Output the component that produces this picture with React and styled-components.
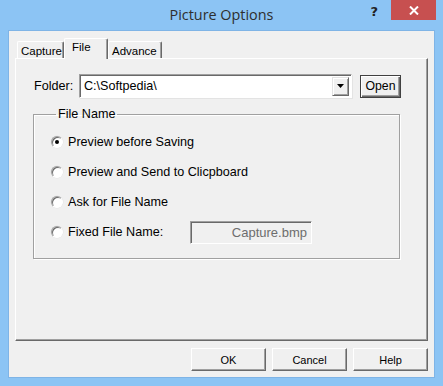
import React, { useState } from 'react'
import styled, { createGlobalStyle } from 'styled-components'

const GlobalStyle = createGlobalStyle`
  html, body {
    margin: 0;
    padding: 0;
    background: #8cc4f4;
    overflow: hidden;
  }
`

function App() {
  const [choice, setChoice] = useState('preview')

  const options = [
    { id: 'preview', label: 'Preview before Saving' },
    { id: 'clipboard', label: 'Preview and Send to Clicpboard' },
    { id: 'ask', label: 'Ask for File Name' },
  ]

  return (
    <Window>
      <GlobalStyle />
      <TitleBar>
        <Title>Picture Options</Title>
        <HelpGlyph>?</HelpGlyph>
        <CloseButton>
          <svg width="10" height="9" viewBox="0 0 10 9">
            <path d="M1 0.5 L9 8.5 M9 0.5 L1 8.5" stroke="#fff" strokeWidth="2" />
          </svg>
        </CloseButton>
      </TitleBar>

      <Client>
        <TabStrip>
          <Tab $w={47}>Capture</Tab>
          <Tab $w={44} $active>File</Tab>
          <Tab $w={54}>Advance</Tab>
        </TabStrip>

        <Panel>
          <FolderRow>
            <FieldLabel>Folder:</FieldLabel>
            <Combo>
              <ComboText>C:\Softpedia\</ComboText>
              <DropButton>
                <svg width="7" height="4" viewBox="0 0 7 4">
                  <path d="M0 0 H7 L3.5 4 Z" fill="#000" />
                </svg>
              </DropButton>
            </Combo>
            <OpenButton>Open</OpenButton>
          </FolderRow>

          <Group>
            <Legend>File Name</Legend>
            {options.map((o) => (
              <OptionRow key={o.id} onClick={() => setChoice(o.id)}>
                <Radio $checked={choice === o.id} />
                <OptionText>{o.label}</OptionText>
              </OptionRow>
            ))}
            <OptionRow onClick={() => setChoice('fixed')}>
              <Radio $checked={choice === 'fixed'} />
              <OptionText $w={122}>Fixed File Name:</OptionText>
              <FixedBox>Capture.bmp</FixedBox>
            </OptionRow>
          </Group>
        </Panel>

        <ButtonRow>
          <DialogButton>OK</DialogButton>
          <DialogButton>Cancel</DialogButton>
          <DialogButton>Help</DialogButton>
        </ButtonRow>
      </Client>
    </Window>
  )
}

export default App

const Window = styled.div`
  width: 443px;
  height: 386px;
  display: flex;
  flex-direction: column;
  background: #8cc4f4;
  font-family: "Liberation Sans", Arial, sans-serif;
  color: #000;
`

const TitleBar = styled.div`
  height: 30px;
  display: flex;
  align-items: flex-start;
  justify-content: flex-end;
  position: relative;
`

const Title = styled.div`
  position: absolute;
  left: 0;
  right: 0;
  top: 5px;
  text-align: center;
  font-family: "Open Sans", "Noto Sans", sans-serif;
  font-size: 14.4px;
  color: #2e2e2e;
`

const HelpGlyph = styled.div`
  font-family: "DejaVu Sans", sans-serif;
  font-weight: bold;
  font-size: 13px;
  color: #222;
  margin: 4px 13px 0 0;
`

const CloseButton = styled.div`
  width: 45px;
  height: 20px;
  margin-right: 7px;
  background: #c75050;
  display: flex;
  align-items: center;
  justify-content: center;
`

const Client = styled.div`
  margin: 0 8px 8px;
  height: 348px;
  box-sizing: border-box;
  background: #f0f0f0;
  border: 1px solid #7fb4e6;
  padding: 7px 6px 6px;
  display: flex;
  flex-direction: column;
`

const TabStrip = styled.div`
  height: 20px;
  display: flex;
  align-items: flex-end;
  padding-left: 2px;
  position: relative;
  z-index: 1;
`

const Tab = styled.div`
  box-sizing: border-box;
  width: ${(p) => p.$w}px;
  height: ${(p) => (p.$active ? 21 : 17)}px;
  margin-bottom: ${(p) => (p.$active ? -1 : 0)}px;
  padding: ${(p) => (p.$active ? '2px 0 0 7px' : '3px 0 0 3px')};
  font-size: 11.5px;
  background: #f0f0f0;
  border-top: 1px solid #fff;
  border-left: 1px solid #fff;
  border-right: 1px solid #696969;
  box-shadow: inset -1px 0 0 #a0a0a0;
  border-radius: 2px 2px 0 0;
`

const Panel = styled.div`
  box-sizing: border-box;
  width: 413px;
  height: 283px;
  background: #f0f0f0;
  border-top: 1px solid #fff;
  border-left: 1px solid #fff;
  border-right: 1px solid #696969;
  border-bottom: 1px solid #696969;
  box-shadow: inset -1px -1px 0 #a0a0a0;
  padding: 15px 0 0 18px;
`

const FolderRow = styled.div`
  display: flex;
  align-items: center;
  height: 24px;
`

const FieldLabel = styled.div`
  width: 45px;
  font-size: 12.6px;
`

const Combo = styled.div`
  box-sizing: border-box;
  width: 273px;
  height: 24px;
  background: #fff;
  border-top: 1px solid #a0a0a0;
  border-left: 1px solid #a0a0a0;
  border-right: 1px solid #fff;
  border-bottom: 1px solid #fff;
  box-shadow: inset 1px 1px 0 #696969, 1px 1px 0 #e3e3e3;
  display: flex;
  align-items: center;
  padding: 2px 2px 2px 4px;
`

const ComboText = styled.div`
  flex: 1;
  font-size: 12.6px;
`

const DropButton = styled.div`
  box-sizing: border-box;
  width: 17px;
  height: 19px;
  background: #f0f0f0;
  border-top: 1px solid #e3e3e3;
  border-left: 1px solid #e3e3e3;
  border-right: 1px solid #696969;
  border-bottom: 1px solid #696969;
  box-shadow: inset 1px 1px 0 #fff, inset -1px -1px 0 #a0a0a0;
  display: flex;
  align-items: center;
  justify-content: center;
`

const OpenButton = styled.div`
  box-sizing: border-box;
  width: 41px;
  height: 23px;
  margin-left: 8px;
  border: 1px solid #404040;
  background: #f0f0f0;
  box-shadow: inset 1px 1px 0 #fff, inset -1px -1px 0 #696969, inset -2px -2px 0 #a0a0a0;
  font-size: 12.3px;
  display: flex;
  align-items: center;
  justify-content: center;
`

const Group = styled.fieldset`
  box-sizing: border-box;
  width: 367px;
  margin: 9px 0 0 -1px;
  padding: 5px 0 11px 17px;
  border: 1px solid #a0a0a0;
  box-shadow: inset 1px 1px 0 #fff, 1px 1px 0 #fff;
  min-width: 0;
`

const Legend = styled.legend`
  font-size: 12.6px;
  padding: 0 2px;
  margin-left: 5px;
  line-height: 15px;
`

const OptionRow = styled.div`
  height: 30px;
  display: flex;
  align-items: center;
  cursor: default;
`

const Radio = styled.span`
  box-sizing: border-box;
  width: 12px;
  height: 12px;
  border-radius: 50%;
  background: #fff;
  border: 1px solid;
  border-color: #a0a0a0 #fff #fff #a0a0a0;
  box-shadow: inset 1px 1px 0 #696969, 0 0 0 0.5px #e3e3e3;
  display: flex;
  align-items: center;
  justify-content: center;
  margin-right: 5px;

  &::after {
    content: "";
    width: 4px;
    height: 4px;
    border-radius: 50%;
    background: #000;
    display: ${(p) => (p.$checked ? 'block' : 'none')};
  }
`

const OptionText = styled.span`
  font-size: 12.6px;
  width: ${(p) => (p.$w ? `${p.$w}px` : 'auto')};
`

const FixedBox = styled.div`
  box-sizing: border-box;
  width: 122px;
  height: 23px;
  background: #f0f0f0;
  border-top: 1px solid #a0a0a0;
  border-left: 1px solid #a0a0a0;
  border-right: 1px solid #fff;
  border-bottom: 1px solid #fff;
  box-shadow: inset 1px 1px 0 #696969;
  color: #6d6d6d;
  font-size: 13px;
  text-align: right;
  padding: 3px 4px 0 0;
`

const ButtonRow = styled.div`
  display: flex;
  justify-content: flex-end;
  gap: 6px;
  width: 413px;
  margin-top: 7px;
`

const DialogButton = styled.div`
  box-sizing: border-box;
  width: 75px;
  height: 23px;
  background: #f0f0f0;
  border-top: 1px solid #fff;
  border-left: 1px solid #fff;
  border-right: 1px solid #696969;
  border-bottom: 1px solid #696969;
  box-shadow: inset -1px -1px 0 #a0a0a0;
  font-size: 11px;
  display: flex;
  align-items: center;
  justify-content: center;
`
